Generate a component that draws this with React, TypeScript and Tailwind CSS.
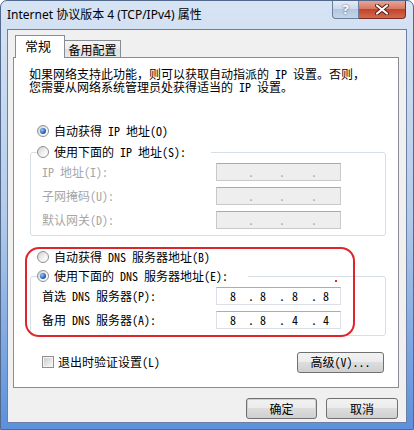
import React from 'react';

const font = "font-['Noto_Sans_Mono_CJK_SC','Noto_Sans_CJK_SC',sans-serif]";

function Radio({ checked, disabled }: { checked?: boolean; disabled?: boolean }) {
  return (
    <span
      className={`flex h-[12px] w-[12px] shrink-0 items-center justify-center rounded-full border ${
        disabled
          ? 'border-[#bcbcbc] bg-[#f4f4f4]'
          : 'border-[#8e8f8f] bg-[linear-gradient(135deg,#d0d0d0,#f4f4f4_60%,#ffffff)]'
      }`}
    >
      {checked && (
        <span className="h-[6px] w-[6px] rounded-full bg-[radial-gradient(circle_at_35%_35%,#9cc8f7,#2a66c4_55%,#0d3580)]" />
      )}
    </span>
  );
}

function IpBox({ values, disabled }: { values?: string[]; disabled?: boolean }) {
  const v = values ?? ['', '', '', ''];
  return (
    <div
      className={`flex h-[18px] w-[125px] items-center border pl-[10px] text-[12px] leading-[16px] ${
        disabled
          ? 'border-[#c9c9c9] border-t-[#a9a9a9] bg-[#eeeeee] text-[#a8a8a8]'
          : 'border-[#dbdfe6] border-t-[#abadb3] bg-white text-black'
      }`}
    >
      <span className="w-[12px] text-center">{v[0]}</span>
      <span className="ml-[9px] w-[6px] text-center">.</span>
      <span className="ml-[3px] w-[12px] text-center">{v[1]}</span>
      <span className="ml-[10px] w-[6px] text-center">.</span>
      <span className="ml-[4px] w-[12px] text-center">{v[2]}</span>
      <span className="ml-[10px] w-[6px] text-center">.</span>
      <span className="ml-[3px] w-[12px] text-center">{v[3]}</span>
    </div>
  );
}

function Row({ label, disabled, values }: { label: string; disabled?: boolean; values?: string[] }) {
  return (
    <div className="flex h-[18px] items-center">
      <span className={`w-[179px] pl-[5px] ${disabled ? 'text-[#a6a6a6]' : 'text-black'}`}>{label}</span>
      <IpBox disabled={disabled} values={values} />
    </div>
  );
}

const btn =
  'flex h-[21px] items-center justify-center rounded-[3px] border border-[#707070] bg-[linear-gradient(#f2f2f2,#ebebeb_50%,#dddddd_50%,#cfcfcf)] text-[12px] text-black';

export default function App() {
  return (
    <div className={`${font} h-[430px] w-[414px] overflow-hidden`}>
      <div className="flex h-[430px] w-[414px] flex-col rounded-t-[7px] border border-[#52698c] bg-linear-to-b from-[#d7e4f4] via-[#b3cbea] to-[#5b90dc]">
        {/* title bar */}
        <div className="flex h-[28px] shrink-0 items-start pl-[6px] pr-[7px]">
          <span className="mt-[6px] font-['Noto_Sans','Noto_Sans_CJK_SC',sans-serif] text-[12px] leading-[16px] text-black">
            Internet 协议版本 4 (TCP/IPv4) 属性
          </span>
          <div className="ml-auto flex">
            <div className="flex h-[18px] w-[27px] items-center justify-center rounded-bl-[4px] border border-t-0 border-[#6d7f9b] bg-[linear-gradient(#e4ecf6,#c8d7ea_50%,#b2c7e0_50%,#c3d5ea)] font-['Noto_Sans',sans-serif] text-[13px] font-bold leading-none text-white [text-shadow:0_0_2px_#34465f]">
              ?
            </div>
            <div className="flex h-[18px] w-[47px] items-center justify-center rounded-br-[4px] border border-l-0 border-t-0 border-[#7a2a20] bg-[linear-gradient(#e8a493,#d77a63_45%,#c4432b_50%,#d06a4f)]">
              <svg width="14" height="11" viewBox="0 0 14 11">
                <path d="M2 1.5 L12 9.5 M12 1.5 L2 9.5" stroke="#5a1b12" strokeWidth="4" strokeLinecap="round" />
                <path d="M2 1.5 L12 9.5 M12 1.5 L2 9.5" stroke="#ffffff" strokeWidth="2.2" strokeLinecap="round" />
              </svg>
            </div>
          </div>
        </div>

        {/* client area */}
        <div className="mx-[6px] flex h-[394px] w-[400px] flex-col border border-[#6b80a2] bg-[#f0f0f0] text-[12px] leading-[16px] text-black">
          {/* tabs */}
          <div className="flex h-[27px] items-end pl-[7px]">
            <div className="relative z-10 -mb-px flex h-[23px] w-[50px] items-start justify-center border border-b-0 border-[#898c95] bg-white pt-[2px] pr-[4px] text-[13px]">
              常规
            </div>
            <div className="flex h-[17px] w-[56px] items-center justify-center border border-b-0 border-l-0 border-[#898c95] bg-[linear-gradient(#f5f5f5,#ebebeb_50%,#dedede_50%,#e8e8e8)] pt-px">
              备用配置
            </div>
          </div>

          {/* panel */}
          <div className="relative ml-[5px] h-[331px] w-[386px] border border-[#898c95] bg-white pl-[15px] pr-[14px] pt-[9px]">
            <p className="leading-[13px]">
              如果网络支持此功能，则可以获取自动指派的 IP 设置。否则，
              <br />
              您需要从网络系统管理员处获得适当的 IP 设置。
            </p>

            <div className="ml-[8px] mt-[30px] flex h-[16px] items-center gap-[5px]">
              <Radio checked />
              <span>自动获得 IP 地址(O)</span>
            </div>

            <fieldset className="ml-[1px] mt-[5px] w-[356px] rounded-[3px] border border-[#d5dfe5] px-[6px] pb-[6px]">
              <legend className="pr-[25px]">
                <span className="flex h-[16px] items-center gap-[5px]">
                  <Radio />
                  <span>使用下面的 IP 地址(S):</span>
                </span>
              </legend>
              <div className="mt-[3px] flex flex-col gap-[6px]">
                <Row label="IP 地址(I):" disabled />
                <Row label="子网掩码(U):" disabled />
                <Row label="默认网关(D):" disabled />
              </div>
            </fieldset>

            <div className="ml-[8px] mt-[13px] flex h-[16px] items-center gap-[5px]">
              <Radio />
              <span>自动获得 DNS 服务器地址(B)</span>
            </div>

            <fieldset className="ml-[1px] mt-[3px] w-[356px] rounded-[3px] border border-[#d5dfe5] px-[6px] pb-[6px]">
              <legend className="pr-[20px]">
                <span className="flex h-[16px] items-center gap-[5px]">
                  <Radio checked />
                  <span>使用下面的 DNS 服务器地址(E):</span>
                </span>
              </legend>
              <div className="mt-[3px] flex flex-col gap-[6px]">
                <Row label="首选 DNS 服务器(P):" values={['8', '8', '8', '8']} />
                <Row label="备用 DNS 服务器(A):" values={['8', '8', '4', '4']} />
              </div>
            </fieldset>

            <div className="mt-[17px] flex h-[18px] items-center justify-between">
              <div className="ml-[13px] flex items-center gap-[4px]">
                <span className="h-[12px] w-[12px] border border-[#8f8f8f] bg-[linear-gradient(135deg,#c9c9c9,#ececec_70%,#f6f6f6)] shadow-[inset_0_0_0_1px_#f4f4f4]" />
                <span>退出时验证设置(L)</span>
              </div>
              <button className={`${btn} h-[18px] w-[87px] leading-none`}>高级(V)...</button>
            </div>

            {/* red annotation */}
            <div className="pointer-events-none absolute left-[11px] top-[189px] h-[90px] w-[330px] rounded-[14px] border-2 border-[#e0242b]" />
            <div className="pointer-events-none absolute left-[321px] top-[222px] h-[2px] w-[2px] bg-[#e0242b]" />
          </div>

          {/* bottom buttons */}
          <div className="mt-[10px] flex justify-end gap-[9px] pr-[8px]">
            <button className={`${btn} w-[71px] border-[#3c7fb1] shadow-[inset_0_0_0_1px_#a8dcf7]`}>确定</button>
            <button className={`${btn} w-[72px]`}>取消</button>
          </div>
        </div>
      </div>
    </div>
  );
}
